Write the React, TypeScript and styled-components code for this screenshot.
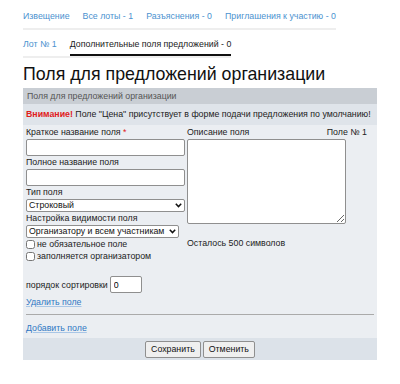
import React, { FC } from 'react';
import styled, { createGlobalStyle } from 'styled-components';

const GlobalStyle = createGlobalStyle`
  body {
    margin: 0;
    background: #ffffff;
    font-family: 'Liberation Sans', Arial, sans-serif;
    font-size: 8.8px;
    color: #222;
  }
`;

const Page = styled('div')`
  padding: 10px 23px 0 23px;
  width: 354px;
`;

const Tabs = styled('ul')`
  display: inline-flex;
  gap: 13px;
  list-style: none;
  margin: 0;
  padding: 0;
  border-bottom: 2px solid #eeeeee;
`;

const Tab = styled('li')<{ active?: boolean }>`
  line-height: 13px;
  padding-bottom: ${props => (props.active ? '3px' : '5px')};
  color: ${props => (props.active ? '#222' : '#4b92cf')};
  border-bottom: ${props => (props.active ? '2px solid #111' : 'none')};
`;

const TabRow = styled('div')<{ top: number }>`
  margin-top: ${props => props.top}px;
`;

const Title = styled('h1')`
  margin: 4px 0 2px 0;
  font-size: 17.8px;
  font-weight: normal;
  line-height: 24px;
  color: #111;
`;

const Panel = styled('div')`
  background: #ebeef2;
`;

const PanelHeader = styled('div')`
  background: #c9ced4;
  color: #555;
  height: 16px;
  line-height: 16px;
  padding-left: 4px;
`;

const Alert = styled('div')`
  background: #dfe4ea;
  height: 21px;
  line-height: 21px;
  padding-left: 3px;
  white-space: nowrap;
`;

const Warn = styled('b')`
  color: #e0201c;
`;

const FormBody = styled('div')`
  padding: 1px 3px 0 3px;
`;

const Columns = styled('div')`
  display: grid;
  grid-template-columns: 159px 1fr;
  column-gap: 2px;
`;

const Column = styled('div')`
  display: flex;
  flex-direction: column;
`;

const Label = styled('div')`
  height: 13px;
  line-height: 13px;
  display: flex;
  justify-content: space-between;
  padding-right: 7px;
`;

const Req = styled('span')`
  color: #e0201c;
`;

const TextInput = styled('input')<{ w?: number }>`
  box-sizing: border-box;
  width: ${props => (props.w ? `${props.w}px` : '100%')};
  height: 17px;
  margin: 0;
  padding: 1px 3px;
  font: inherit;
  border: 1px solid #8f8f8f;
  border-radius: 2px;
  background: #fff;
`;

const SelectWrap = styled('div')<{ w?: number }>`
  position: relative;
  width: ${props => (props.w ? `${props.w}px` : '100%')};
  height: 13px;
`;

const NativeSelect = styled('select')`
  box-sizing: border-box;
  appearance: none;
  width: 100%;
  height: 13px;
  margin: 0;
  padding: 0 10px 0 2px;
  font: inherit;
  line-height: 11px;
  border: 1px solid #8f8f8f;
  border-radius: 2px;
  background: #fff;
  color: #111;
`;

const Chevron = styled('svg')`
  position: absolute;
  right: 3px;
  top: 4px;
  pointer-events: none;
`;

const Select: FC<{ w?: number; value: string }> = ({ w, value }) => (
  <SelectWrap w={w}>
    <NativeSelect defaultValue={value}>
      <option value={value}>{value}</option>
    </NativeSelect>
    <Chevron width="7" height="5" viewBox="0 0 7 5">
      <path d="M0.8 0.8 L3.5 3.6 L6.2 0.8" fill="none" stroke="#111" strokeWidth="1.5" />
    </Chevron>
  </SelectWrap>
);

const CheckRow = styled('label')`
  display: flex;
  align-items: center;
  height: 12px;
  gap: 2px;
`;

const Check = styled('input')`
  width: 9px;
  height: 9px;
  margin: 0;
`;

const TextArea = styled('textarea')`
  box-sizing: border-box;
  width: 159px;
  height: 85px;
  margin: 0;
  border: 1px solid #8f8f8f;
  border-radius: 2px;
  resize: both;
  font: inherit;
`;

const Remaining = styled('div')`
  margin-top: 13px;
  line-height: 12px;
`;

const SortRow = styled('div')`
  display: flex;
  align-items: center;
  gap: 2px;
  margin-top: 14px;
`;

const LinkRow = styled('div')`
  height: 14px;
  line-height: 14px;
  margin-top: 2px;
`;

const Link = styled('a')`
  color: #2f78c4;
  text-decoration: underline;
  text-decoration-color: #a9c6e6;
`;

const Divider = styled('hr')`
  border: none;
  border-top: 1px solid #aaaaaa;
  margin: 5px 0 6px 0;
`;

const Footer = styled('div')`
  background: #dce2e9;
  height: 22px;
  margin-top: 3px;
  display: flex;
  justify-content: center;
  align-items: center;
  gap: 2px;
`;

const Button = styled('button')`
  height: 17px;
  padding: 0 5px;
  font: inherit;
  color: #111;
  background: #efefef;
  border: 1px solid #8f8f8f;
  border-radius: 2px;
`;

const App = () => (
  <>
    <GlobalStyle />
    <Page>
      <TabRow top={0}>
        <Tabs>
          <Tab>Извещение</Tab>
          <Tab>Все лоты - 1</Tab>
          <Tab>Разъяснения - 0</Tab>
          <Tab>Приглашения к участию - 0</Tab>
        </Tabs>
      </TabRow>
      <TabRow top={8}>
        <Tabs>
          <Tab>Лот № 1</Tab>
          <Tab active>Дополнительные поля предложений - 0</Tab>
        </Tabs>
      </TabRow>
      <Title>Поля для предложений организации</Title>
      <Panel>
        <PanelHeader>Поля для предложений организации</PanelHeader>
        <Alert>
          <Warn>Внимание!</Warn> Поле "Цена" присутствует в форме подачи предложения по умолчанию!
        </Alert>
        <FormBody>
          <Columns>
            <Column>
              <Label>
                <span>
                  Краткое название поля <Req>*</Req>
                </span>
              </Label>
              <TextInput type="text" />
              <Label>Полное название поля</Label>
              <TextInput type="text" />
              <Label>Тип поля</Label>
              <Select value="Строковый" />
              <Label>Настройка видимости поля</Label>
              <Select w={153} value="Организатору и всем участникам" />
              <CheckRow>
                <Check type="checkbox" />
                не обязательное поле
              </CheckRow>
              <CheckRow>
                <Check type="checkbox" />
                заполняется организатором
              </CheckRow>
            </Column>
            <Column>
              <Label>
                <span>Описание поля</span>
                <span>Поле № 1</span>
              </Label>
              <TextArea />
              <Remaining>Осталось 500 символов</Remaining>
            </Column>
          </Columns>
          <SortRow>
            порядок сортировки
            <TextInput type="text" w={32} defaultValue="0" />
          </SortRow>
          <LinkRow>
            <Link href="#">Удалить поле</Link>
          </LinkRow>
          <Divider />
          <LinkRow>
            <Link href="#">Добавить поле</Link>
          </LinkRow>
        </FormBody>
        <Footer>
          <Button>Сохранить</Button>
          <Button>Отменить</Button>
        </Footer>
      </Panel>
    </Page>
  </>
);

export default App;
